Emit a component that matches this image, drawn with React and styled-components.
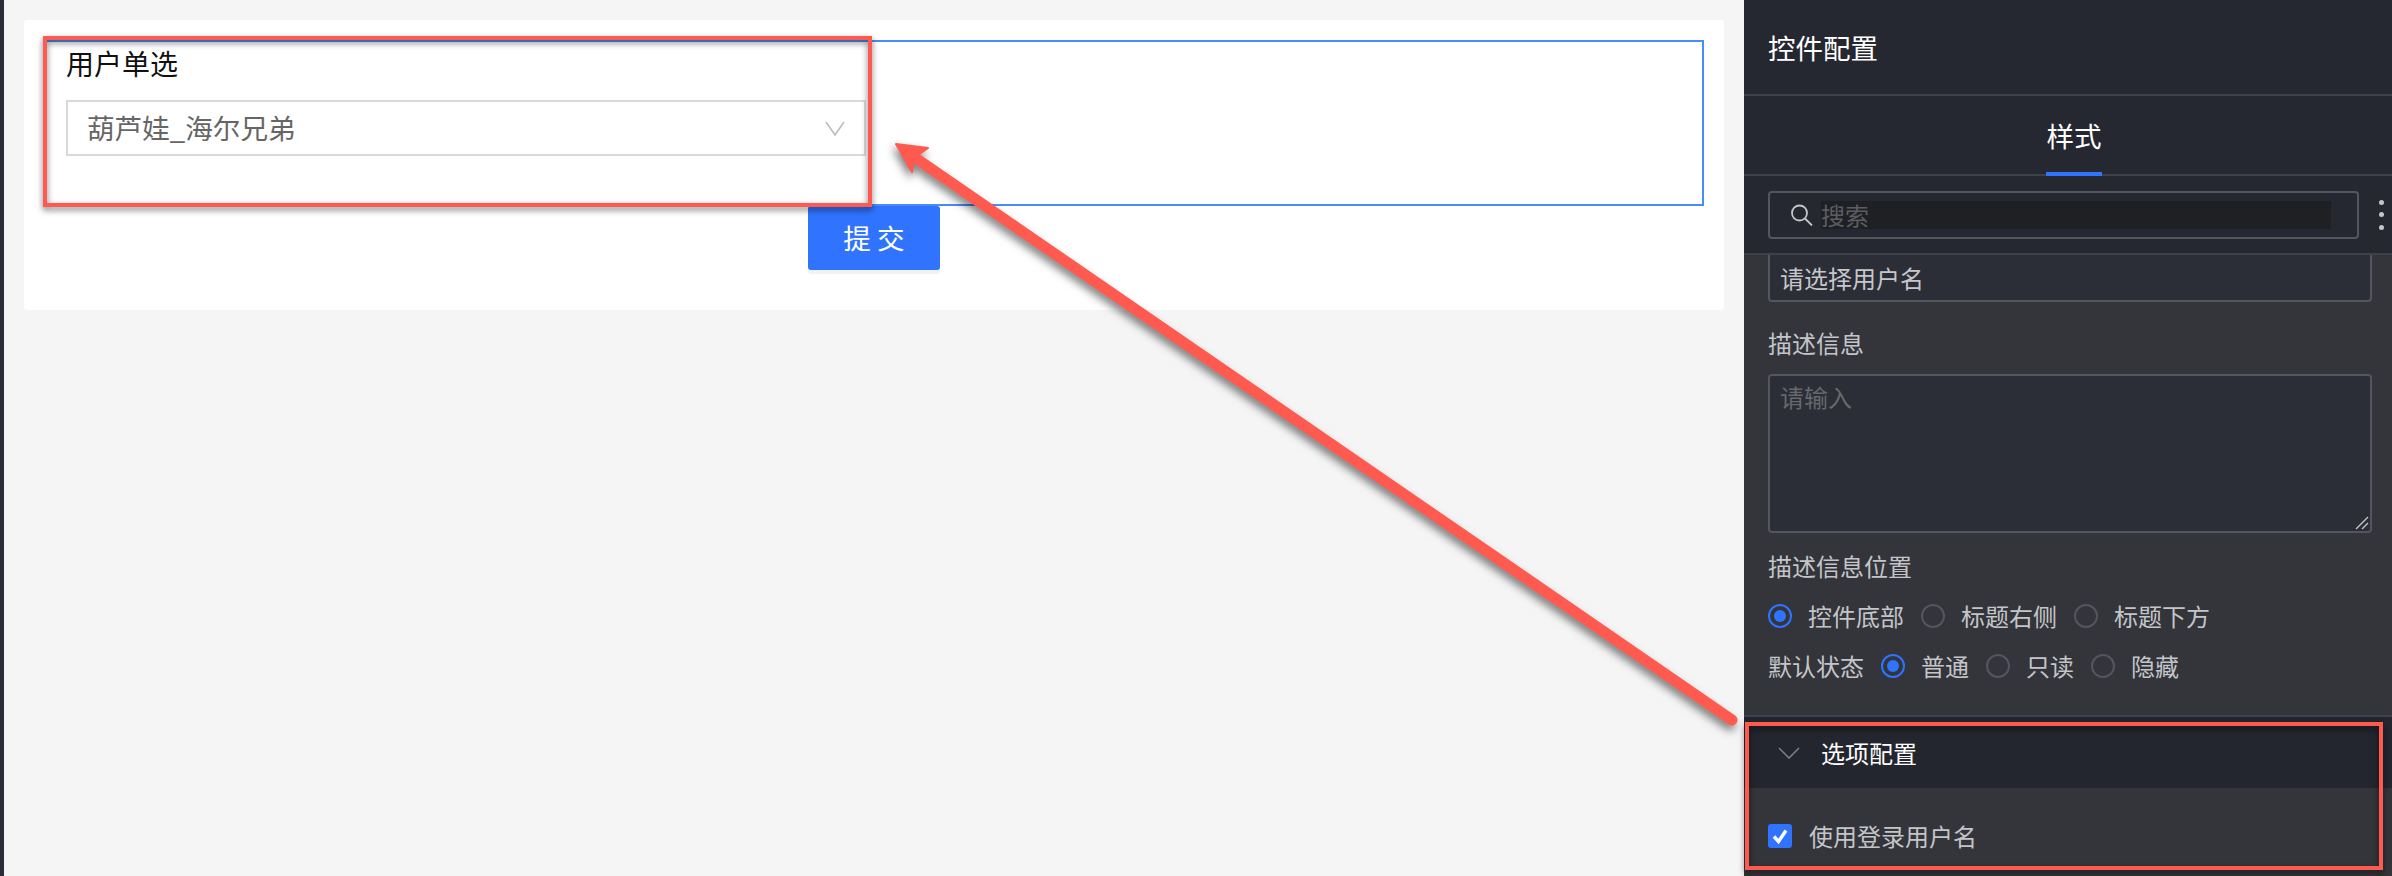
import React from "react";
import styled, { createGlobalStyle } from "styled-components";

const GlobalStyle = createGlobalStyle`
  html, body {
    margin: 0;
    padding: 0;
    background: #f4f4f4;
  }
  * {
    box-sizing: border-box;
  }
  body {
    font-family: "Noto Sans CJK SC", "Noto Sans", sans-serif;
  }
`;

const Page = styled.div`
  position: relative;
  display: flex;
  width: 2392px;
  height: 876px;
  overflow: hidden;
  background: #f5f5f5;
`;

const LeftEdge = styled.div`
  width: 4px;
  background: #2a2d35;
`;

const Canvas = styled.main`
  flex: 1;
  padding: 20px;
`;

const Card = styled.section`
  height: 290px;
  padding: 20px 20px 0 20px;
  background: #ffffff;
  border-radius: 3px;
`;

const SelectedWidget = styled.div`
  height: 166px;
  padding: 3px 20px 0;
  border: 2px solid #4a8cf7;
`;

const WidgetLabel = styled.div`
  display: flex;
  align-items: center;
  height: 36px;
  font-size: 28px;
  line-height: 1;
  color: #111111;
`;

const SelectBox = styled.div`
  display: flex;
  align-items: center;
  justify-content: space-between;
  width: 800px;
  height: 56px;
  margin-top: 19px;
  padding: 0 19px;
  border: 2px solid #d9d9d9;
  font-size: 27.6px;
  line-height: 1;
  color: #666666;
`;

const SubmitRow = styled.div`
  display: flex;
  justify-content: center;
`;

const SubmitButton = styled.button`
  width: 132px;
  height: 64px;
  padding: 0;
  border: 0;
  border-radius: 3px;
  background: #2f73ff;
  box-shadow: 0 4px 0 rgba(0, 0, 0, 0.05);
  font-family: inherit;
  font-size: 27.6px;
  line-height: 1;
  color: #ffffff;
`;

const Sidebar = styled.aside`
  display: flex;
  flex-direction: column;
  width: 648px;
  background: #33353b;
`;

const SidebarTitle = styled.header`
  display: flex;
  align-items: center;
  height: 96px;
  padding: 2px 0 0 24px;
  border-bottom: 2px solid #3f4148;
  background: #252830;
  font-size: 27.5px;
  line-height: 1;
  color: #ffffff;
`;

const Tabs = styled.div`
  display: flex;
  align-items: center;
  justify-content: center;
  height: 80px;
  padding: 2px 0 0 12px;
  border-bottom: 2px solid #3f4148;
  background: #252830;
`;

const Tab = styled.div`
  position: relative;
  display: flex;
  align-items: center;
  justify-content: center;
  width: 56px;
  height: 100%;
  font-size: 27.5px;
  line-height: 1;
  color: #ffffff;

  &::after {
    content: "";
    position: absolute;
    left: 0;
    right: 0;
    bottom: -2px;
    height: 4px;
    background: #2f73ff;
  }
`;

const SearchRow = styled.div`
  display: flex;
  align-items: center;
  height: 79px;
  padding: 0 0 0 24px;
  border-bottom: 2px solid #3f4148;
  background: #252830;
`;

const SearchBox = styled.div`
  display: flex;
  align-items: center;
  width: 591px;
  height: 48px;
  padding: 0 26px 0 20px;
  border: 2px solid #54565d;
  border-radius: 4px;
`;

const SearchField = styled.div`
  display: flex;
  align-items: center;
  flex: 1;
  height: 28px;
  margin-left: 8px;
  background: #1e2024;
  font-size: 24px;
  line-height: 1;
  color: #5c5d61;
`;

const MoreDots = styled.div`
  display: flex;
  flex-direction: column;
  gap: 7.5px;
  margin-left: 20px;
`;

const Dot = styled.span`
  width: 5px;
  height: 5px;
  border-radius: 50%;
  background: #c4c6ca;
`;

const ScrollBody = styled.div`
  flex: 1;
  padding: 0 20px 0 24px;
`;

const ValueInput = styled.div`
  display: flex;
  align-items: center;
  height: 47px;
  padding-left: 10px;
  border: 2px solid #54565d;
  border-top: 0;
  border-radius: 0 0 4px 4px;
  background: #2b2e36;
  font-size: 24px;
  line-height: 1;
  color: #c6c7ca;
`;

const FieldLabel = styled.div`
  display: flex;
  align-items: center;
  height: 36px;
  margin-top: ${(p) => p.$top}px;
  font-size: 24px;
  line-height: 1;
  color: #c4c5c8;
`;

const TextArea = styled.div`
  position: relative;
  height: 159px;
  margin-top: 13px;
  padding: 7px 10px;
  border: 2px solid #54565d;
  border-radius: 4px;
  background: #2b2e36;
  font-size: 24px;
  line-height: 1.2;
  color: #66686d;
`;

const ResizeGrip = styled.svg`
  position: absolute;
  right: 1px;
  bottom: 1px;
`;

const RadioRow = styled.div`
  display: flex;
  align-items: center;
  gap: 17px;
  height: 32px;
  margin-top: ${(p) => p.$top}px;
  font-size: 24px;
  line-height: 1;
  color: #c4c5c8;
`;

const RadioItem = styled.label`
  display: flex;
  align-items: center;
  gap: 16px;
`;

const RadioMark = styled.span`
  display: flex;
  align-items: center;
  justify-content: center;
  width: 24px;
  height: 24px;
  border: 2px solid ${(p) => (p.$on ? "#2f73ff" : "#54565d")};
  border-radius: 50%;

  &::after {
    content: "";
    display: ${(p) => (p.$on ? "block" : "none")};
    width: 12px;
    height: 12px;
    border-radius: 50%;
    background: #2f73ff;
  }
`;

const SectionHeader = styled.div`
  display: flex;
  align-items: center;
  height: 73px;
  padding: 0 0 0 34px;
  border-top: 2px solid #3f4148;
  background: #23262e;
  font-size: 24px;
  line-height: 1;
  color: #ffffff;
`;

const SectionTitle = styled.span`
  margin-left: 21px;
`;

const SectionBody = styled.div`
  display: flex;
  align-items: center;
  gap: 17px;
  height: 88px;
  padding: 8px 0 0 24px;
  font-size: 24px;
  line-height: 1;
  color: #c4c5c8;
`;

const CheckMark = styled.span`
  display: flex;
  align-items: center;
  justify-content: center;
  width: 24px;
  height: 24px;
  border-radius: 3px;
  background: #2f73ff;
`;

const Highlight = styled.div`
  position: absolute;
  left: ${(p) => p.$x}px;
  top: ${(p) => p.$y}px;
  width: ${(p) => p.$w}px;
  height: ${(p) => p.$h}px;
  border: 4px solid #ff5a4f;
  filter: drop-shadow(0 3px 3px rgba(0, 0, 0, 0.55));
  pointer-events: none;
`;

const ArrowLayer = styled.svg`
  position: absolute;
  left: 0;
  top: 0;
  filter: drop-shadow(-2px 5px 4px rgba(0, 0, 0, 0.5));
  pointer-events: none;
`;

const Radio = ({ on, children }) => (
  <RadioItem>
    <RadioMark $on={on} />
    {children}
  </RadioItem>
);

export default function App() {
  return (
    <Page>
      <GlobalStyle />
      <LeftEdge />
      <Canvas>
        <Card>
          <SelectedWidget>
            <WidgetLabel>用户单选</WidgetLabel>
            <SelectBox>
              葫芦娃_海尔兄弟
              <svg width="20" height="15" viewBox="0 0 20 15" fill="none">
                <path d="M1 1l9 13 9-13" stroke="#bdbdbd" strokeWidth="1.6" />
              </svg>
            </SelectBox>
          </SelectedWidget>
          <SubmitRow>
            <SubmitButton>提 交</SubmitButton>
          </SubmitRow>
        </Card>
      </Canvas>
      <Sidebar>
        <SidebarTitle>控件配置</SidebarTitle>
        <Tabs>
          <Tab>样式</Tab>
        </Tabs>
        <SearchRow>
          <SearchBox>
            <svg width="23" height="22" viewBox="0 0 23 22" fill="none">
              <circle cx="9.5" cy="9" r="7.5" stroke="#c4c6ca" strokeWidth="1.8" />
              <path d="M15 14.5l7 7" stroke="#c4c6ca" strokeWidth="1.8" />
            </svg>
            <SearchField>搜索</SearchField>
          </SearchBox>
          <MoreDots>
            <Dot />
            <Dot />
            <Dot />
          </MoreDots>
        </SearchRow>
        <ScrollBody>
          <ValueInput>请选择用户名</ValueInput>
          <FieldLabel $top={23}>描述信息</FieldLabel>
          <TextArea>
            请输入
            <ResizeGrip width="14" height="14" viewBox="0 0 14 14" fill="none">
              <path d="M1 13L13 1M7 13l6-6" stroke="#c4c5c8" strokeWidth="1.4" />
            </ResizeGrip>
          </TextArea>
          <FieldLabel $top={15}>描述信息位置</FieldLabel>
          <RadioRow $top={16}>
            <Radio on>控件底部</Radio>
            <Radio>标题右侧</Radio>
            <Radio>标题下方</Radio>
          </RadioRow>
          <RadioRow $top={18}>
            <span>默认状态</span>
            <Radio on>普通</Radio>
            <Radio>只读</Radio>
            <Radio>隐藏</Radio>
          </RadioRow>
        </ScrollBody>
        <SectionHeader>
          <svg width="22" height="12" viewBox="0 0 22 12" fill="none">
            <path d="M1 1l10 10L21 1" stroke="#7a7d85" strokeWidth="1.6" />
          </svg>
          <SectionTitle>选项配置</SectionTitle>
        </SectionHeader>
        <SectionBody>
          <CheckMark>
            <svg width="18" height="16" viewBox="0 0 18 16" fill="none">
              <path d="M3 8.5l4.5 5L15 2.5" stroke="#ffffff" strokeWidth="3.4" />
            </svg>
          </CheckMark>
          使用登录用户名
        </SectionBody>
      </Sidebar>
      <Highlight $x={43} $y={36} $w={829} $h={171} />
      <Highlight $x={1745} $y={722} $w={638} $h={148} />
      <ArrowLayer width="2392" height="876" viewBox="0 0 2392 876">
        <path d="M914 157L1732 720" stroke="#ff5a4f" strokeWidth="11" strokeLinecap="round" />
        <path
          d="M896 144L928 148L914 158L912 172Z"
          fill="#ff5a4f"
          stroke="#ff5a4f"
          strokeWidth="2"
          strokeLinejoin="round"
        />
      </ArrowLayer>
    </Page>
  );
}
